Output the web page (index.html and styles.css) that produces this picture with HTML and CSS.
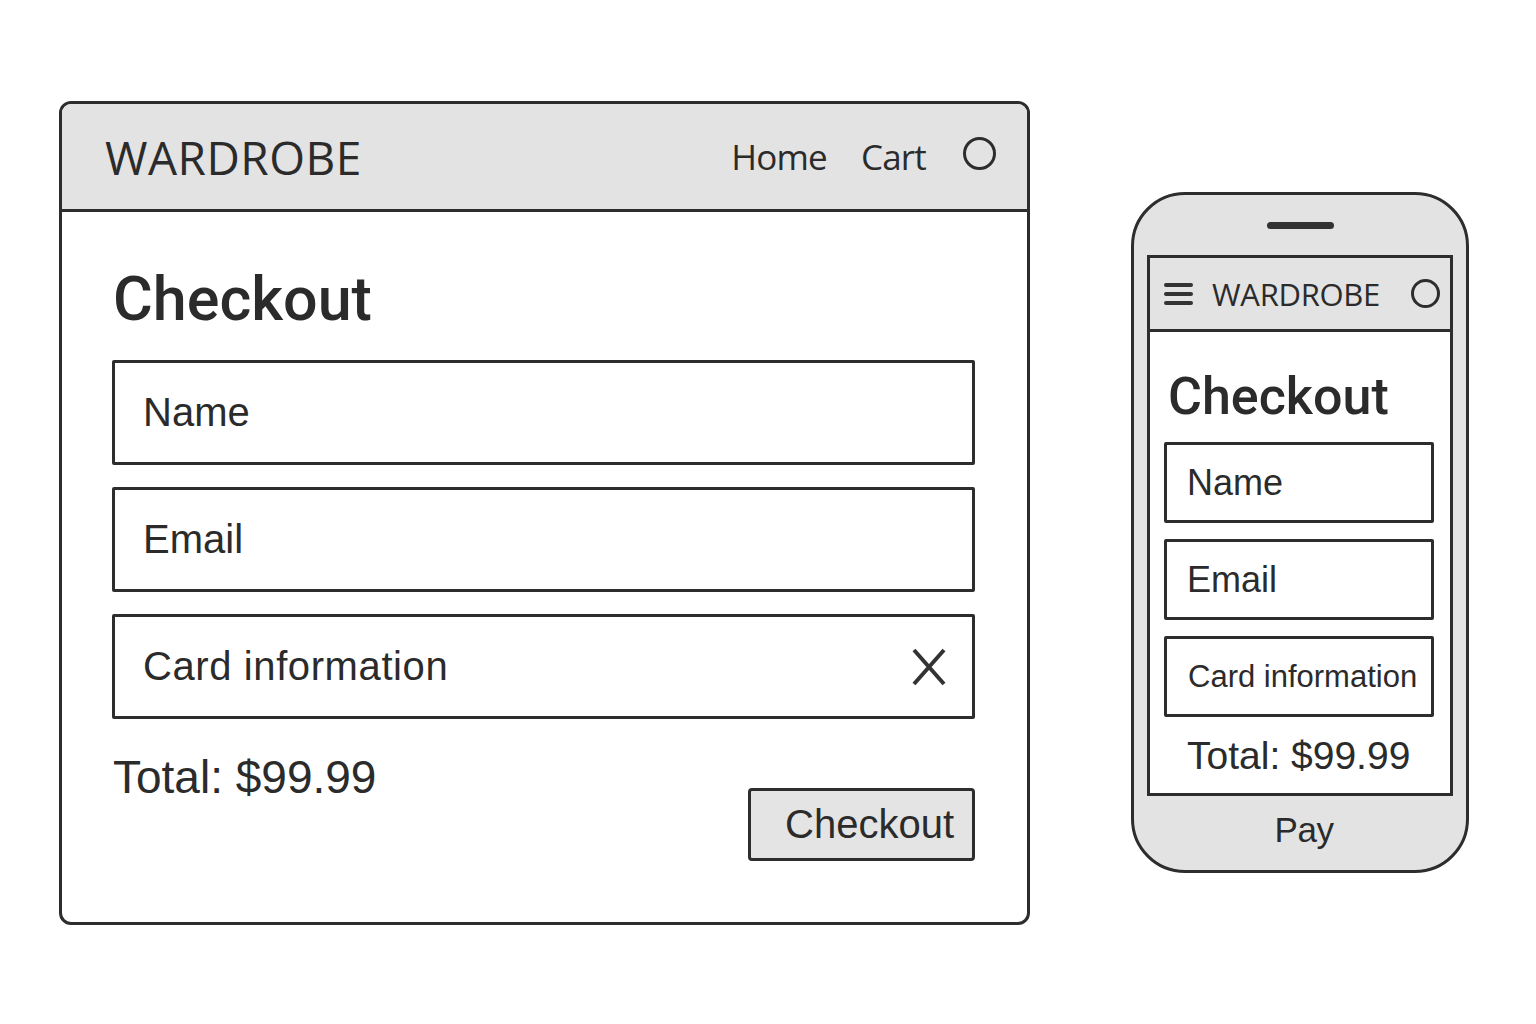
FILE: index.html
```html
<!DOCTYPE html>
<html lang="en">
<head>
    <meta charset="UTF-8">
    <meta name="viewport" content="width=device-width, initial-scale=1.0">
    <title>Wardrobe - Checkout</title>
    <link rel="stylesheet" href="styles.css">
</head>
<body>

<div class="page">
    <!-- desktop -->
    <div class="window">
        <div class="topbar">
            <span class="brand">WARDROBE</span>
            <nav class="nav">
                <a href="#">Home</a>
                <a href="#">Cart</a>
                <span class="avatar"></span>
            </nav>
        </div>
        <div class="content">
            <h1>Checkout</h1>
            <div class="field">Name</div>
            <div class="field">Email</div>
            <div class="field">
                <span class="wide">Card information</span>
                <svg class="clear" width="34" height="38" viewBox="0 0 34 38">
                    <path d="M2 2 L32 36 M32 2 L2 36" stroke="#333" stroke-width="4" fill="none"/>
                </svg>
            </div>
            <div class="footer-row">
                <span class="total">Total: $99.99</span>
                <button class="btn">Checkout</button>
            </div>
        </div>
    </div>

    <!-- mobile -->
    <div class="phone">
        <div class="speaker"></div>
        <div class="screen">
            <div class="m-topbar">
                <span class="burger"><i></i><i></i><i></i></span>
                <span class="m-brand">WARDROBE</span>
                <span class="avatar small"></span>
            </div>
            <div class="m-content">
                <h2>Checkout</h2>
                <div class="m-field">Name</div>
                <div class="m-field">Email</div>
                <div class="m-field card">Card information</div>
                <div class="m-total">Total: $99.99</div>
            </div>
        </div>
        <div class="pay">Pay</div>
    </div>
</div>

</body>
</html>
```

FILE: styles.css
```css
body {
    margin: 0;
    background: #fff;
    color: #2b2b2b;
    font-family: "Liberation Sans", Arial, sans-serif;
}
.page {
    display: flex;
    align-items: flex-start;
    gap: 101px;
    padding: 101px 0 0 59px;
}

/* desktop window */
.window {
    width: 971px;
    height: 824px;
    box-sizing: border-box;
    border: 3px solid #2d2d2d;
    border-radius: 12px;
    overflow: hidden;
    background: #fff;
}
.topbar {
    height: 108px;
    box-sizing: border-box;
    background: #e3e3e3;
    border-bottom: 3px solid #2d2d2d;
    display: flex;
    align-items: center;
    justify-content: space-between;
    padding: 0 31px 0 43px;
}
.brand {
    font-family: "Open Sans", sans-serif;
    font-size: 46px;
    letter-spacing: 0.5px;
}
.nav {
    display: flex;
    align-items: center;
    gap: 34px;
}
.nav a {
    color: #2b2b2b;
    text-decoration: none;
    font-family: "Open Sans", sans-serif;
    font-size: 35px;
    letter-spacing: -0.8px;
}
.avatar {
    width: 33px;
    height: 33px;
    box-sizing: border-box;
    border: 3.5px solid #2d2d2d;
    border-radius: 50%;
    margin-left: 3px;
    margin-top: -6px;
}
.content {
    padding: 0 52px 0 50px;
}
h1 {
    font-family: Roboto, sans-serif;
    font-weight: 500;
    font-size: 61px;
    line-height: 1.2;
    margin: 51px 0 24px 1px;
}
.field {
    height: 105px;
    box-sizing: border-box;
    border: 3px solid #2d2d2d;
    border-radius: 2px;
    display: flex;
    align-items: center;
    justify-content: space-between;
    padding: 0 26px 0 28px;
    font-size: 40px;
    margin-bottom: 22px;
}
.wide {
    letter-spacing: 0.6px;
}
.clear {
    display: block;
}
.footer-row {
    display: flex;
    justify-content: space-between;
    align-items: flex-start;
    margin-top: 31px;
}
.total {
    font-size: 46px;
    line-height: 1.2;
    margin-left: 1px;
}
.btn {
    margin-top: 38px;
    width: 227px;
    height: 73px;
    box-sizing: border-box;
    background: #e4e4e4;
    border: 3px solid #2d2d2d;
    border-radius: 4px;
    font-family: "Liberation Sans", Arial, sans-serif;
    font-size: 40px;
    color: #2b2b2b;
    text-align: right;
    padding: 0 18px 0 0;
}

/* phone */
.phone {
    margin-top: 91px;
    width: 338px;
    height: 681px;
    box-sizing: border-box;
    border: 3px solid #2d2d2d;
    border-radius: 54px;
    background: #e3e3e3;
    padding: 0 13px;
    display: flex;
    flex-direction: column;
    align-items: stretch;
}
.speaker {
    width: 67px;
    height: 7px;
    border-radius: 4px;
    background: #333;
    margin: 27px auto 26px;
}
.screen {
    height: 541px;
    box-sizing: border-box;
    border: 3px solid #2d2d2d;
    background: #fff;
}
.m-topbar {
    height: 74px;
    box-sizing: border-box;
    background: #e3e3e3;
    border-bottom: 3px solid #2d2d2d;
    display: flex;
    align-items: center;
    padding: 0 10px 0 14px;
}
.burger {
    display: flex;
    flex-direction: column;
    gap: 5px;
    width: 29px;
}
.burger i {
    display: block;
    height: 4px;
    border-radius: 2px;
    background: #333;
}
.m-brand {
    flex: 1;
    margin-left: 19px;
    font-family: "Open Sans", sans-serif;
    font-size: 31px;
    letter-spacing: -0.3px;
}
.avatar.small {
    width: 29px;
    height: 29px;
    margin: 0;
}
.m-content {
    padding: 0 16px 0 14px;
}
h2 {
    font-family: Roboto, sans-serif;
    font-weight: 500;
    font-size: 52px;
    line-height: 1.2;
    margin: 34px 0 14px 4px;
}
.m-field {
    height: 81px;
    box-sizing: border-box;
    border: 3px solid #2d2d2d;
    border-radius: 2px;
    display: flex;
    align-items: center;
    padding-left: 20px;
    font-size: 36px;
    margin-bottom: 16px;
}
.m-field.card {
    font-size: 31px;
    padding-left: 21px;
    white-space: nowrap;
}
.m-total {
    font-size: 39px;
    line-height: 1.2;
    margin: 3px 0 0 23px;
}
.pay {
    flex: 1;
    display: flex;
    align-items: center;
    justify-content: center;
    font-size: 35px;
    letter-spacing: -0.5px;
    padding: 0 0 6px 8px;
}
```
